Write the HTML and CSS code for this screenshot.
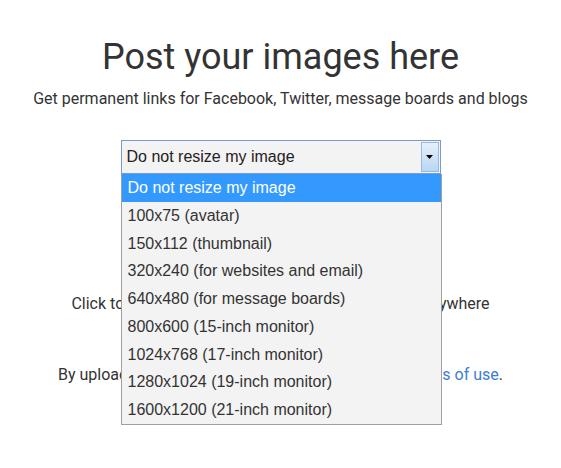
FILE: index.html
```html
<!DOCTYPE html>
<html>
<head>
<meta charset="utf-8">
<link rel="stylesheet" href="styles.css">
</head>
<body>
<main class="page">
  <h1 class="title">Post your images here</h1>
  <p class="subtitle">Get permanent links for Facebook, Twitter, message boards and blogs</p>
  <div class="picker">
    <div class="select">
      <span class="select-value">Do not resize my image</span>
      <span class="select-arrow"><svg width="7" height="4" viewBox="0 0 7 4"><path d="M0 0H7L3.5 4Z" fill="#000"/></svg></span>
    </div>
    <ul class="options">
      <li class="option selected">Do not resize my image</li>
      <li class="option">100x75 (avatar)</li>
      <li class="option">150x112 (thumbnail)</li>
      <li class="option">320x240 (for websites and email)</li>
      <li class="option">640x480 (for message boards)</li>
      <li class="option">800x600 (15-inch monitor)</li>
      <li class="option">1024x768 (17-inch monitor)</li>
      <li class="option">1280x1024 (19-inch monitor)</li>
      <li class="option">1600x1200 (21-inch monitor)</li>
    </ul>
  </div>
  <div class="upload-space"></div>
  <p class="hint">Click to upload images, or drag and drop the files anywhere</p>
  <p class="terms">By uploading images, you are agreeing to the site <a href="#" class="link">terms of use</a>.</p>
</main>
</body>
</html>
```
FILE: styles.css
```css
html, body {
  margin: 0;
  padding: 0;
  background: #fff;
}
body {
  min-height: 468px;
}
.page {
  font-family: Roboto, "Liberation Sans", sans-serif;
  color: #333;
  text-align: center;
  padding-top: 36px;
  padding-bottom: 60px;
}
.title {
  font-size: 36px;
  font-weight: 400;
  margin: 0;
  line-height: 42px;
}
.subtitle {
  font-size: 16px;
  margin: 11px 0 0;
  line-height: 20px;
}
.picker {
  position: relative;
  width: 320px;
  margin: 31px auto 0;
  text-align: left;
  font-family: "Liberation Sans", Arial, sans-serif;
}
.select {
  height: 32px;
  border: 1px solid #7a9bd0;
  background: #f3f3f3;
  display: flex;
  align-items: stretch;
}
.select-value {
  flex: 1;
  font-size: 16px;
  line-height: 32px;
  padding-left: 5px;
  color: #222;
}
.select-arrow {
  width: 16px;
  margin: 1px;
  border: 1px solid #9ab8e0;
  background: linear-gradient(#e6f1fb, #b9d6f2);
  display: flex;
  align-items: center;
  justify-content: center;
}
.options {
  position: absolute;
  left: 0;
  top: 34px;
  margin: 0;
  padding: 0;
  list-style: none;
  background: #f3f3f3;
  border: 1px solid #a0a0a0;
  border-top: none;
  box-sizing: border-box;
  width: 321px;
}
.option {
  font-size: 16px;
  line-height: 27.75px;
  height: 27.75px;
  padding-left: 6px;
  color: #333;
}
.option.selected {
  background: #3399ff;
  color: #fff;
}
.upload-space {
  height: 120px;
}
.hint {
  font-size: 16px;
  margin: 0;
  line-height: 20px;
}
.terms {
  font-size: 16px;
  margin: 51px 0 0;
  line-height: 20px;
}
.link {
  color: #3b7dd8;
  text-decoration: none;
}
```
